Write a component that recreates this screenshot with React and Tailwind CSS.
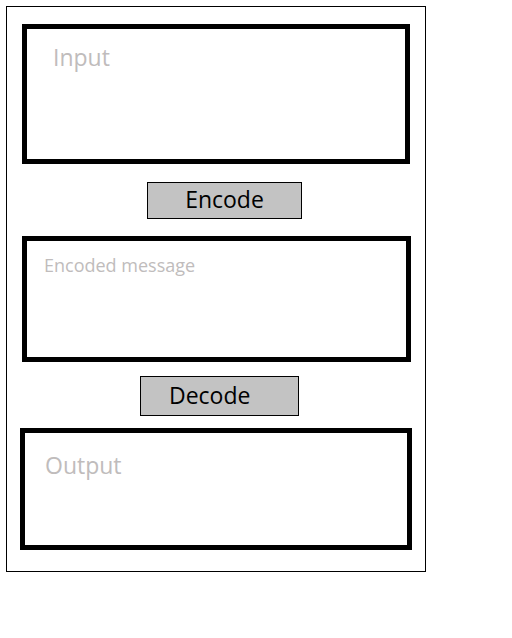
export default function App() {
  const font = { fontFamily: '"Open Sans", "Liberation Sans", sans-serif' };
  return (
    <div className="w-[512px] h-[638px] bg-white" style={font}>
      <div className="flex flex-col items-start w-[420px] h-[566px] border border-black ml-[6px] mt-[6px] bg-white">
        <div className="ml-[15px] mt-[17px] w-[388px] h-[140px] border-[5px] border-black pl-[26px] pt-[17px]">
          <div className="text-[23px] leading-none text-[#c0bcbc]">Input</div>
        </div>
        <div className="ml-[140px] mt-[18px] w-[155px] h-[37px] border border-black bg-[#c3c3c3] flex justify-center pt-[5px]">
          <span className="text-[23px] leading-none text-black">Encode</span>
        </div>
        <div className="ml-[15px] mt-[17px] w-[389px] h-[126px] border-[5px] border-black pl-[17px] pt-[15px]">
          <div className="text-[18px] leading-none text-[#c0bcbc]">Encoded message</div>
        </div>
        <div className="ml-[133px] mt-[14px] w-[159px] h-[40px] border border-black bg-[#c3c3c3] flex pl-[28px] pt-[7px]">
          <span className="text-[23px] leading-none text-black">Decode</span>
        </div>
        <div className="ml-[13px] mt-[12px] w-[392px] h-[122px] border-[5px] border-black pl-[20px] pt-[21px]">
          <div className="text-[23px] leading-none text-[#c0bcbc]">Output</div>
        </div>
      </div>
    </div>
  );
}
